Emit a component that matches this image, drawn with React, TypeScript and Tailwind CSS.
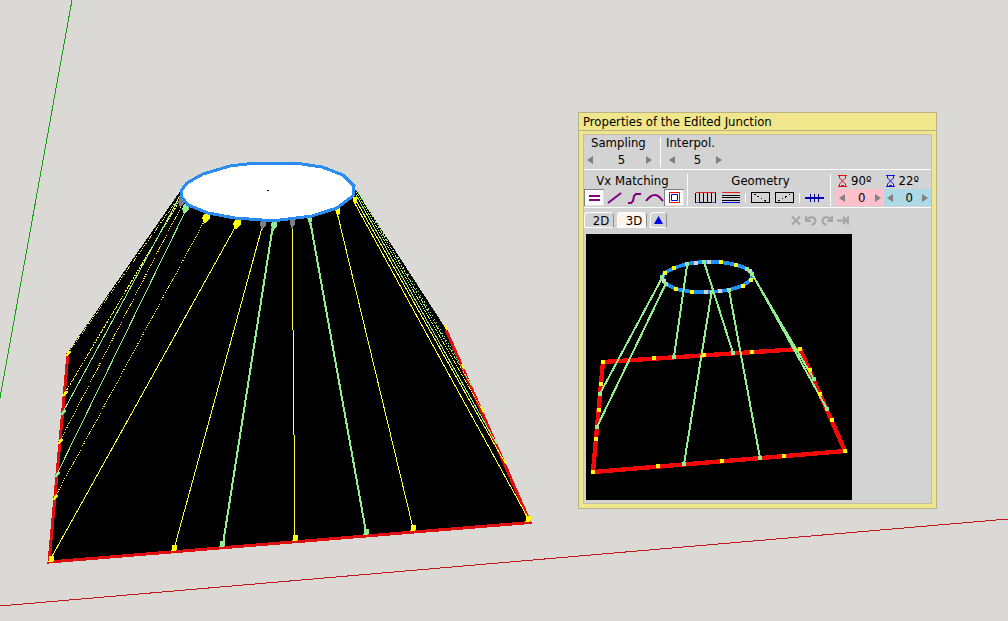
import React, { useState } from "react";
import clsx from "clsx";

type Point = [number, number];

const YELLOW = "#ffff00";
const GREEN = "#90ee90";
const GRAY = "#808080";

interface Strand {
  from: Point;
  to: Point;
  color: string;
  width?: number;
  dash?: string;
}

// links between the circle and the square, left to right
const strands: Strand[] = [
  { from: [180, 196], to: [68, 353], color: "#f0f060", dash: "1 1" },
  { from: [180, 200], to: [65, 393], color: "#ffff40", dash: "2 1" },
  { from: [178, 200], to: [63, 412], color: GREEN },
  { from: [182, 205], to: [60, 441], color: "#ffff40", dash: "1 1" },
  { from: [186, 210], to: [57, 474], color: GREEN },
  { from: [206, 218], to: [55, 497], color: "#ffff40", dash: "1 1" },
  { from: [237, 224], to: [50, 560], color: "#ffff40" },
  { from: [263, 224], to: [174, 549], color: "#ffff40" },
  { from: [273, 225], to: [223, 544], color: GREEN, width: 2 },
  { from: [292, 223], to: [295, 538], color: "#ffff40" },
  { from: [310, 220], to: [366, 532], color: GREEN, width: 2 },
  { from: [337, 212], to: [413, 528], color: "#ffff40" },
  { from: [353, 200], to: [529, 520], color: "#ffff40" },
  { from: [354, 197], to: [504, 461], color: "#ffff40" },
  { from: [356, 195], to: [495, 441], color: GREEN },
  { from: [356, 192], to: [482, 410], color: "#ffff40", dash: "1 1" },
  { from: [357, 190], to: [470, 383], color: GREEN, dash: "2 1" },
  { from: [357, 188], to: [462, 366], color: GREEN, dash: "1 3" },
];

const sceneMarks: [number, number, string][] = [
  [68, 353, YELLOW],
  [65, 393, YELLOW],
  [63, 412, GREEN],
  [60, 441, YELLOW],
  [57, 474, GREEN],
  [55, 497, YELLOW],
];

const rightMarks: [number, number, string][] = [
  [445, 327, YELLOW],
  [462, 366, YELLOW],
  [470, 383, GREEN],
  [482, 410, YELLOW],
  [495, 441, GREEN],
  [504, 461, YELLOW],
];

// heads sitting just under the rim: x, y, lean, color
const rimMarks: [number, number, number, string][] = [
  [182, 202, -2, GRAY],
  [186, 209, -2, GREEN],
  [207, 218, -3, YELLOW],
  [238, 224, -3, YELLOW],
  [263, 225, -1, GRAY],
  [274, 226, -1, GREEN],
  [292, 224, 0, GRAY],
  [309, 221, 1, GREEN],
  [337, 213, 1, YELLOW],
  [354, 202, 2, YELLOW],
];

const baseMarks: [number, number, string][] = [
  [51, 559, YELLOW],
  [174, 548, YELLOW],
  [222, 544, GREEN],
  [295, 538, YELLOW],
  [366, 532, GREEN],
  [413, 528, YELLOW],
  [528, 519, YELLOW],
];

const Scene: React.FC = () => (
  <svg
    className="absolute inset-0 h-full w-full"
    viewBox="0 0 1008 621"
    preserveAspectRatio="xMinYMin slice"
    shapeRendering="crispEdges"
    fill="none"
    aria-hidden="true"
  >
    <path d="M72 0L0 398" stroke="#12a012" />
    <path d="M0 606L1008 519" stroke="#c01818" />
    <path d="M181 190L68 352L49 562L531 522L446 329L356 190Z" fill="#000" />
    <path
      d="M68 353L49 562L530 522.500L446 330"
      stroke="#e01010"
      strokeWidth="3"
    />
    {strands.map((s, i) => (
      <line
        key={i}
        x1={s.from[0]}
        y1={s.from[1]}
        x2={s.to[0]}
        y2={s.to[1]}
        stroke={s.color}
        strokeWidth={s.width ?? 1}
        strokeDasharray={s.dash}
      />
    ))}
    {sceneMarks.map(([x, y, color]) => (
      <path
        key={`${x}-${y}`}
        d={`M${x - 2} ${y + 2}h2l3 -4h-2z`}
        fill={color}
        stroke={color}
      />
    ))}
    {rightMarks.map(([x, y, color]) => (
      <path
        key={`${x}-${y}`}
        d={`M${x - 1} ${y - 2}h1l2 4h-1z`}
        fill={color}
        stroke={color}
      />
    ))}
    {baseMarks.map(([x, y, color]) => (
      <path
        key={x}
        d={`M${x - 2} ${y + 2}h4l1 -5h-4z`}
        fill={color}
        stroke={color}
      />
    ))}
    {rimMarks.map(([x, y, lean, color]) => (
      <path
        key={x}
        d={`M${x - 2} ${y - 5}h5v5l-2 2l${lean} 3h-1l-2 -5z`}
        fill={color}
      />
    ))}
    <path
      d="M181 191L187 183L203 174L230 166L255 163H295L322 167L343 175L354 186L353 196L337 208L312 216L280 220H262L235 218L208 213L188 205L181 196Z"
      fill="#fff"
      stroke="#2a8cf0"
      strokeWidth="3"
    />
    <path d="M267 190h2" stroke="#000" />
  </svg>
);

const previewStrands = [
  "M247 148L60 497",
  "M257 168L51 597",
  "M322 107L282 387",
  "M372 101L459 375",
  "M395 192L312 708",
  "M447 186L540 690",
  "M514 135L702 454",
  "M519 142L741 543",
];

const previewMarks: Record<string, Point[]> = {
  "#ffff00": [
    [255, 134], [282, 120], [422, 102], [468, 110], [514, 155], [488, 173],
    [336, 192], [288, 183], [69, 402], [222, 390], [372, 381], [516, 372],
    [660, 363], [690, 426], [720, 498], [756, 576], [795, 669], [612, 684],
    [426, 699], [234, 714], [39, 732], [48, 633], [57, 546], [63, 468],
  ],
  "#d3d3d3": [[348, 104], [387, 101], [510, 129], [420, 189], [378, 192], [251, 160]],
  "#90ee90": [
    [247, 148], [257, 169], [322, 107], [372, 101], [501, 122], [517, 139],
    [395, 192], [447, 186], [60, 497], [51, 597], [282, 387], [459, 375],
    [312, 708], [540, 690], [702, 454], [741, 543],
  ],
};

const Preview: React.FC = () => (
  <svg
    className="block h-[266px] w-[266px] bg-black"
    viewBox="18 18 798 798"
    shapeRendering="crispEdges"
    fill="none"
    role="img"
    aria-label="3D preview"
  >
    <path
      d="M247 148L255 134L282 120L322 107L372 101L422 102L468 110L501 122L517 137L514 155L488 173L447 186L395 192H336L288 183L257 168Z"
      stroke="#1e90ff"
      strokeWidth="11"
    />
    <path
      d="M69 402L660 363L795 669L39 732Z"
      stroke="#f40808"
      strokeWidth="13"
    />
    {previewStrands.map((d) => (
      <path key={d} d={d} stroke="#90ee90" strokeWidth="6" />
    ))}
    {Object.entries(previewMarks).map(([color, points]) =>
      points.map(([x, y]) => (
        <rect
          key={`${x}-${y}`}
          x={x - 6}
          y={y - 6}
          width="12"
          height="12"
          fill={color}
        />
      )),
    )}
  </svg>
);

interface StepperProps {
  label: string;
  initial: number;
  className?: string;
}

const Stepper: React.FC<StepperProps> = ({ label, initial, className }) => {
  const [value, setValue] = useState(initial);

  return (
    <div className={clsx("flex h-[17px] items-center", className)}>
      <button
        type="button"
        aria-label={`Decrease ${label}`}
        onClick={() => setValue(value - 1)}
        className="flex w-3 justify-center"
      >
        <svg width="6" height="8" viewBox="0 0 6 8" fill="#808080">
          <path d="M6 0v8L0 4z" />
        </svg>
      </button>
      <input
        aria-label={label}
        value={value}
        onChange={(e) => setValue(Number(e.target.value) || 0)}
        className="h-[17px] w-0 flex-1 pl-1 text-center outline-none"
      />
      <button
        type="button"
        aria-label={`Increase ${label}`}
        onClick={() => setValue(value + 1)}
        className="flex w-3 justify-center"
      >
        <svg width="6" height="8" viewBox="0 0 6 8" fill="#808080">
          <path d="M0 0v8l6-4z" />
        </svg>
      </button>
    </div>
  );
};

const matchingModes = [
  { id: "equal", icon: <path d="M5 7h11M5 11h11" /> },
  { id: "line", icon: <path d="M4 14L17 4" /> },
  { id: "spline", icon: <path d="M4 14h3l2-2 1-5 2-2h5" /> },
  { id: "arc", icon: <path d="M2 12c3-4 5-6 9-6s5 3 8 6" /> },
  {
    id: "nested",
    icon: (
      <>
        <path d="M5.500 3.500h10v10h-10z" stroke="#f00000" strokeWidth="1" />
        <path d="M7.500 5.500h6v6h-6z" stroke="#0000e0" strokeWidth="1" />
      </>
    ),
  },
];

const geometryTools = [
  {
    label: "Vertical lines",
    width: 22,
    icon: (
      <>
        <path d="M.5 4v10M4.500 4v10M8.500 4v10M12.500 4v10M16.500 4v10M20.500 4v10M4 13.500h13" stroke="#000" />
        <path d="M1 3.500h20" stroke="#e02020" />
        <path d="M1 13.500h3M17 13.500h3" stroke="#5050d0" />
      </>
    ),
  },
  {
    label: "Horizontal lines",
    width: 18,
    icon: (
      <>
        <path d="M0 6.500h18M0 8.500h18M0 11.500h18" stroke="#000" />
        <path d="M0 3.500h18" stroke="#e02020" />
        <path d="M0 13.500h18" stroke="#0000e0" />
      </>
    ),
  },
  {
    label: "Diagonal down",
    width: 19,
    icon: (
      <>
        <path d="M.5 3.500h18v10H.5z" stroke="#000" />
        <path d="M3 5l13 8" stroke="#000" strokeDasharray="2 2" />
      </>
    ),
  },
  {
    label: "Diagonal up",
    width: 19,
    icon: (
      <>
        <path d="M.5 3.500h18v10H.5z" stroke="#000" />
        <path d="M3 12L16 5" stroke="#000" strokeDasharray="2 2" />
      </>
    ),
  },
];

const Hourglass: React.FC<{ color: string }> = ({ color }) => (
  <svg width="9" height="12" viewBox="0 0 9 12" fill="none" stroke={color}>
    <path d="M0 .5h9M0 11.500h9M1.500 0v3l6 6v3M7.500 0v3l-6 6v3" />
    <path d="M3 10.500h3" />
  </svg>
);

const historyActions = [
  { label: "Clear", width: 10, d: "M1 1.500l8 8M9 1.500l-8 8" },
  { label: "Undo", width: 12, d: "M1 1v5h5M1.500 5.500C4 1 10 1 10.500 5.500C10.500 8 9 9.500 6.500 9.500" },
  { label: "Redo", width: 12, d: "M11 1v5H6M10.500 5.500C8 1 2 1 1.500 5.500C1.500 8 3 9.500 5.500 9.500" },
  { label: "Run to end", width: 12, d: "M0 5.500h9M6 2l3.500 3.500L6 9M11 1.500v8" },
];

const GroupLabel: React.FC<{ children: React.ReactNode; className?: string }> = ({
  children,
  className,
}) => (
  <div className={clsx("h-[16px] leading-[16px] whitespace-nowrap", className)}>
    {children}
  </div>
);

const PropertiesPanel: React.FC = () => {
  const [mode, setMode] = useState("equal");
  const [nested, setNested] = useState(true);
  const [tab, setTab] = useState("3D");

  const toggle = (id: string) => {
    if (id === "nested") setNested(!nested);
    else setMode(id);
  };

  return (
    <section className="absolute top-[112px] left-[578px] w-[359px] border border-[#b9b188] bg-[#f0e68c]">
      <h1 className="h-[18px] border-b border-[#b9b188] pl-1 leading-[17px]">
        Properties of the Edited Junction
      </h1>

      <div className="m-1 mt-[3px] border border-[#c9bda0] bg-[#d3d3d3]">
        <div className="flex h-[35px] border-b border-white">
          <div className="w-[76px]">
            <GroupLabel className="pl-[7px]">Sampling</GroupLabel>
            <Stepper label="Sampling" initial={5} className="w-[71px]" />
          </div>
          <div className="my-[2px] w-px bg-white" />
          <div className="pl-[5px]">
            <GroupLabel>Interpol.</GroupLabel>
            <Stepper label="Interpolation" initial={5} className="w-[59px]" />
          </div>
        </div>

        <div className="flex h-[38px] border-b border-white pt-[3px]">
          <div className="w-[103px]">
            <GroupLabel className="pr-[6px] text-center">Vx Matching</GroupLabel>
            <div className="flex">
              {matchingModes.map((m) => {
                const active = m.id === "nested" ? nested : mode === m.id;
                return (
                  <button
                    key={m.id}
                    type="button"
                    aria-label={m.id}
                    aria-pressed={active}
                    onClick={() => toggle(m.id)}
                    className={clsx(
                      "h-[17px] w-[20px]",
                      active &&
                        "bg-white shadow-[inset_1px_1px_0_#808080,inset_-1px_-1px_0_#e8e0d8]",
                    )}
                  >
                    <svg width="20" height="17" viewBox="0 0 20 17" fill="none" stroke="#800080" strokeWidth="2">
                      {m.icon}
                    </svg>
                  </button>
                );
              })}
            </div>
          </div>
          <div className="my-px w-px bg-white" />
          <div className="w-[142px] pl-[7px]">
            <GroupLabel className="pr-[4px] text-center">Geometry</GroupLabel>
            <div className="flex h-[17px] items-center gap-[5px]">
              {geometryTools.map((t, i) => (
                <React.Fragment key={t.label}>
                  {i === 2 && <div className="h-[10px] w-px bg-white" />}
                  <button type="button" aria-label={t.label}>
                    <svg width={t.width} height="17" viewBox={`0 0 ${t.width} 17`} fill="none" shapeRendering="crispEdges">
                      {t.icon}
                    </svg>
                  </button>
                </React.Fragment>
              ))}
              <div className="h-[10px] w-px bg-white" />
              <button type="button" aria-label="Subdivide">
                <svg width="19" height="17" viewBox="0 0 19 17" fill="none" stroke="#000080" shapeRendering="crispEdges">
                  <path d="M0 9h19" stroke="#0000c8" strokeWidth="2" />
                  <path d="M5.500 5v8M9.500 5v8M13.500 5v8" />
                </svg>
              </button>
            </div>
          </div>
          <div className="my-px w-px bg-white" />
          <div className="flex flex-1 pl-[5px]">
            <div className="flex-1">
              <GroupLabel className="flex items-center gap-[4px] pl-[2px]">
                <Hourglass color="#e01010" />
                90º
              </GroupLabel>
              <Stepper label="First angle" initial={0} className="bg-[#ffc0cb]" />
            </div>
            <div className="flex-1">
              <GroupLabel className="flex items-center gap-[4px] pl-[2px]">
                <Hourglass color="#1010e0" />
                22º
              </GroupLabel>
              <Stepper label="Second angle" initial={0} className="bg-[#add8e6]" />
            </div>
          </div>
        </div>

        <div className="flex h-[26px] items-start justify-between pt-[4px]">
          <div className="flex gap-[3px]" role="tablist">
            {["2D", "3D"].map((name) => (
              <button
                key={name}
                type="button"
                role="tab"
                aria-selected={tab === name}
                onClick={() => setTab(name)}
                className={clsx(
                  "h-[16px] w-[30px] rounded-t border border-t-white border-r-[#909090] border-b-white border-l-white pl-1 leading-[15px]",
                  tab === name ? "bg-[#fff5ea]" : "bg-[#d3d3d3]",
                )}
              >
                {name}
              </button>
            ))}
            <button
              type="button"
              aria-label="Collapse"
              className="flex h-[16px] w-[17px] items-center justify-center rounded-t border border-t-white border-r-[#909090] border-b-white border-l-white"
            >
              <svg width="9" height="8" viewBox="0 0 9 8" fill="#0000e8">
                <path d="M4.500 0L9 8H0z" />
              </svg>
            </button>
          </div>
          <div className="flex h-[16px] items-center gap-[4px] pr-[82px]">
            {historyActions.map((a) => (
              <button key={a.label} type="button" aria-label={a.label}>
                <svg
                  width={a.width}
                  height="11"
                  viewBox={`0 0 ${a.width} 11`}
                  fill="none"
                  stroke="#a4a4a4"
                  strokeWidth="2"
                >
                  <path d={a.d} />
                </svg>
              </button>
            ))}
          </div>
        </div>

        <div className="px-[2px] pb-[3px]">
          <Preview />
        </div>
      </div>
    </section>
  );
};

const App: React.FC = () => {
  return (
    <main className="relative h-screen w-full overflow-hidden bg-[#dad9d5] font-['DejaVu_Sans_Condensed','DejaVu_Sans',sans-serif] text-[13px] text-black">
      <Scene />
      <PropertiesPanel />
    </main>
  );
};

export default App;
